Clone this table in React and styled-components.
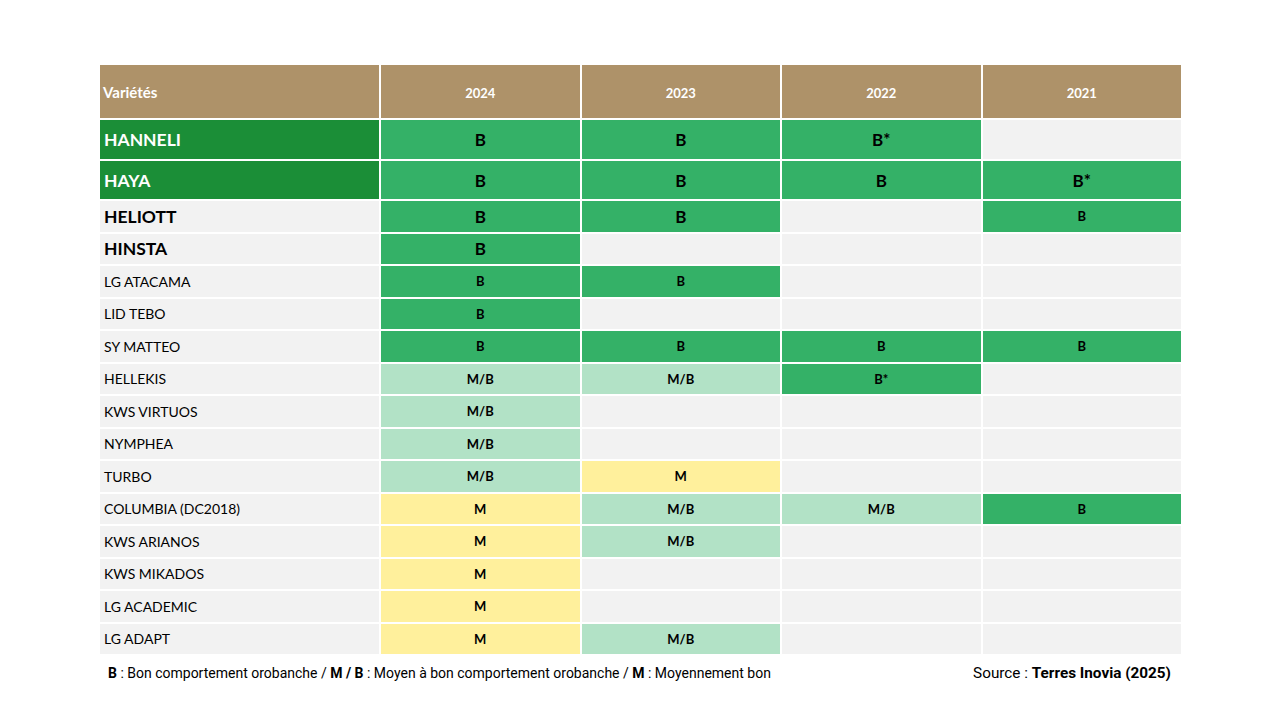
import React from "react";
import styled, { createGlobalStyle } from "styled-components";

const Global = createGlobalStyle`
  html, body { margin: 0; padding: 0; background: #ffffff; }
  body { font-family: Lato, "Noto Sans", sans-serif; }
`;

const COLORS = {
  head: "#AE9269",
  dark: "#1B8E37",
  green: "#34B167",
  light: "#B2E2C6",
  yellow: "#FFF09C",
  empty: "#F2F2F2",
};

const Page = styled.div`
  width: 1280px;
  height: 720px;
  padding: 65px 0 0 100px;
  box-sizing: border-box;
`;

const Table = styled.div`
  width: 1081px;
  display: flex;
  flex-direction: column;
  gap: 2px;
`;

const Row = styled.div`
  display: grid;
  grid-template-columns: 279px repeat(4, 1fr);
  column-gap: 2px;
  height: ${(p) => p.$h}px;
`;

const HeadCell = styled.div`
  background: ${COLORS.head};
  color: #fff;
  font-weight: 700;
  font-size: ${(p) => (p.$first ? 15 : 13)}px;
  display: flex;
  align-items: center;
  justify-content: ${(p) => (p.$first ? "flex-start" : "center")};
  padding-left: ${(p) => (p.$first ? 3 : 0)}px;
  padding-top: ${(p) => (p.$first ? 0 : 2)}px;
`;

const NameCell = styled.div`
  background: ${(p) => (p.$kind === "hero" ? COLORS.dark : COLORS.empty)};
  color: ${(p) => (p.$kind === "hero" ? "#fff" : "#000")};
  font-weight: ${(p) => (p.$kind === "normal" ? 400 : 700)};
  font-size: ${(p) => (p.$kind === "normal" ? 14 : 17.5)}px;
  display: flex;
  align-items: center;
  padding-left: 4px;
`;

const ValueCell = styled.div`
  background: ${(p) => COLORS[p.$bg]};
  color: #000;
  font-weight: 700;
  font-size: ${(p) => p.$size}px;
  display: flex;
  align-items: center;
  justify-content: center;
`;

const Footer = styled.div`
  width: 1081px;
  display: flex;
  justify-content: space-between;
  align-items: center;
  margin-top: 10px;
  font-family: Roboto, "Liberation Sans", sans-serif;
  font-size: 14px;
  color: #000;
`;

const Legend = styled.div`
  padding-left: 8px;
`;

const Source = styled.div`
  padding-right: 10px;
  font-size: 15.3px;
`;

const B = styled.b`
  font-weight: 700;
`;

const years = ["2024", "2023", "2022", "2021"];

// value: [text, color, sizeOverride?]
const rows = [
  { name: "HANNELI", kind: "hero", h: 39, v: [["B", "green"], ["B", "green"], ["B*", "green"], null] },
  { name: "HAYA", kind: "hero", h: 38, v: [["B", "green"], ["B", "green"], ["B", "green"], ["B*", "green"]] },
  { name: "HELIOTT", kind: "strong", h: 30.5, v: [["B", "green"], ["B", "green"], null, ["B", "green", 13]] },
  { name: "HINSTA", kind: "strong", h: 30.5, v: [["B", "green"], null, null, null] },
  { name: "LG ATACAMA", kind: "normal", h: 30.5, v: [["B", "green"], ["B", "green"], null, null] },
  { name: "LID TEBO", kind: "normal", h: 30.5, v: [["B", "green"], null, null, null] },
  { name: "SY MATTEO", kind: "normal", h: 30.5, v: [["B", "green"], ["B", "green"], ["B", "green"], ["B", "green"]] },
  { name: "HELLEKIS", kind: "normal", h: 30.5, v: [["M/B", "light"], ["M/B", "light"], ["B*", "green"], null] },
  { name: "KWS VIRTUOS", kind: "normal", h: 30.5, v: [["M/B", "light"], null, null, null] },
  { name: "NYMPHEA", kind: "normal", h: 30.5, v: [["M/B", "light"], null, null, null] },
  { name: "TURBO", kind: "normal", h: 30.5, v: [["M/B", "light"], ["M", "yellow"], null, null] },
  { name: "COLUMBIA (DC2018)", kind: "normal", h: 30.5, v: [["M", "yellow"], ["M/B", "light"], ["M/B", "light"], ["B", "green"]] },
  { name: "KWS ARIANOS", kind: "normal", h: 30.5, v: [["M", "yellow"], ["M/B", "light"], null, null] },
  { name: "KWS MIKADOS", kind: "normal", h: 30.5, v: [["M", "yellow"], null, null, null] },
  { name: "LG ACADEMIC", kind: "normal", h: 30.5, v: [["M", "yellow"], null, null, null] },
  { name: "LG ADAPT", kind: "normal", h: 30.5, v: [["M", "yellow"], ["M/B", "light"], null, null] },
];

export default function App() {
  return (
    <>
      <Global />
      <Page>
        <Table>
          <Row $h={53}>
            <HeadCell $first>Variétés</HeadCell>
            {years.map((y) => (
              <HeadCell key={y}>{y}</HeadCell>
            ))}
          </Row>
          {rows.map((r) => (
            <Row key={r.name} $h={r.h}>
              <NameCell $kind={r.kind}>{r.name}</NameCell>
              {r.v.map((c, i) =>
                c ? (
                  <ValueCell key={i} $bg={c[1]} $size={c[2] || (r.kind === "normal" ? 13 : 17)}>
                    {c[0]}
                  </ValueCell>
                ) : (
                  <ValueCell key={i} $bg="empty" $size={13} />
                )
              )}
            </Row>
          ))}
        </Table>
        <Footer>
          <Legend>
            <B>B</B> : Bon comportement orobanche / <B>M / B</B> : Moyen à bon comportement orobanche / <B>M</B> : Moyennement bon
          </Legend>
          <Source>
            Source : <B>Terres Inovia (2025)</B>
          </Source>
        </Footer>
      </Page>
    </>
  );
}
